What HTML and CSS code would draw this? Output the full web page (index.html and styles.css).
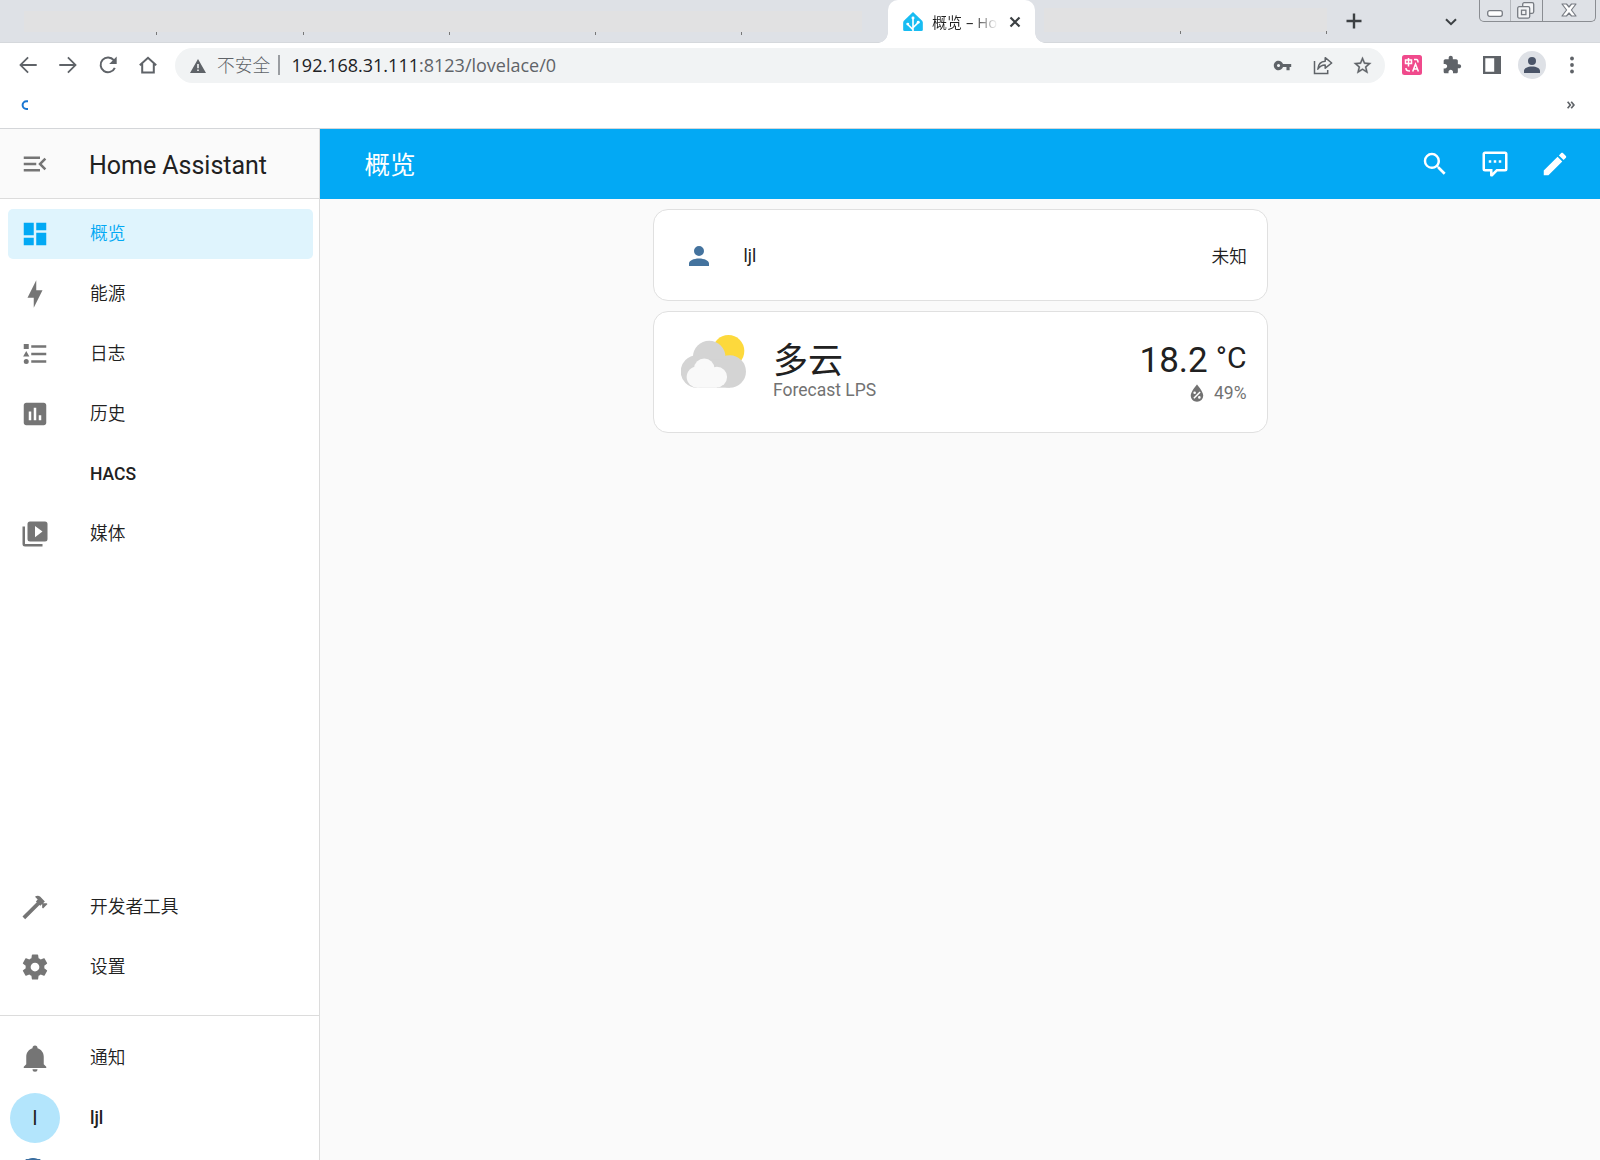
FILE: index.html
```
<!DOCTYPE html>
<html lang="zh-CN">
<head>
    <meta charset="UTF-8">
    <meta name="viewport" content="width=device-width, initial-scale=1.0">
    <title>概览 – Home Assistant</title>
    <link rel="stylesheet" href="styles.css">
</head>
<body>
    <!-- browser window -->
    <div class="tabstrip">
        <div class="tabs left">
            <i></i><i></i><i></i><i></i><i></i>
        </div>
        <div class="tab">
            <svg class="favicon" viewBox="0 0 60 58">
                <path fill="#18bcf2" d="M30 0 57 26Q60 29 60 33V54Q60 58 56 58H4Q0 58 0 54V33Q0 29 3 26Z"/>
                <path stroke="#fff" stroke-width="5" fill="none" d="M30 20V58M30 54 15 39M30 48 45 33"/>
                <g fill="#fff"><circle cx="30" cy="18" r="4.5"/><circle cx="14" cy="37" r="4.5"/><circle cx="46" cy="31" r="4.5"/></g>
            </svg>
            <span class="tab-title">概览 – Ho</span>
            <svg class="tab-close" viewBox="0 0 12 12"><path d="M1.5 1.5l9 9M10.5 1.5l-9 9" stroke="#3c4043" stroke-width="2.2"/></svg>
        </div>
        <div class="tabs right">
            <i></i><i></i>
        </div>
        <svg class="new-tab" viewBox="0 0 16 16"><path d="M8 .5v15M.5 8h15" stroke="#3c4043" stroke-width="2.4"/></svg>
        <svg class="tab-search" viewBox="0 0 12 8"><path d="M1 1.2l5 5 5-5" fill="none" stroke="#3c4043" stroke-width="2"/></svg>
        <div class="win-buttons">
            <span class="min"><svg width="16" height="7" viewBox="0 0 16 7"><rect x=".7" y=".7" width="14.6" height="5.6" rx="2" fill="#fff" stroke="#777b82" stroke-width="1.3"/></svg></span>
            <span class="max"><svg width="18" height="17" viewBox="0 0 18 17"><g fill="#f3f4f6" stroke="#777b82" stroke-width="1.3"><rect x="5.7" y=".7" width="11" height="10.6" rx="1.5"/><rect x=".7" y="4.7" width="12" height="11.4" rx="1.5"/><rect x="4.5" y="8.2" width="4.4" height="4.4"/></g></svg></span>
            <span class="close"><svg width="16" height="14" viewBox="0 0 16 14"><path d="M1 1h4.5L8 4l2.5-3H15l-4.6 6L15 13h-4.5L8 10l-2.5 3H1l4.6-6z" fill="#fff" stroke="#777b82" stroke-width="1.2" stroke-linejoin="round"/></svg></span>
        </div>
    </div>

    <div class="toolbar">
        <span class="tool"><svg width="22" height="22" viewBox="0 0 24 24"><path d="M21.5 11H6.2l6.6-6.6L11.4 3l-9 9 9 9 1.4-1.4L6.2 13h15.3z"/></svg></span>
        <span class="tool"><svg width="22" height="22" viewBox="0 0 24 24"><path d="M2.5 11h15.3l-6.6-6.6L12.6 3l9 9-9 9-1.4-1.4 6.6-6.6H2.5z"/></svg></span>
        <span class="tool"><svg width="20" height="20" viewBox="0 0 20 20"><path d="M16.8 12.8A7.4 7.4 0 1 1 15.8 5.2L17 6.5" fill="none" stroke="#5f6368" stroke-width="2"/><path d="M18.7 1.5V9h-7.5z"/></svg></span>
        <span class="tool"><svg width="20" height="20" viewBox="0 0 20 20"><path d="M1.8 10.2 10 2.8l8.2 7.4M4.2 8.5v9h11.6v-9" fill="none" stroke="#5f6368" stroke-width="2"/></svg></span>
        <div class="omnibox">
            <svg class="warn" viewBox="0 0 16 14"><path fill-rule="evenodd" d="M8 0l8 14H0zM7.2 5v4.2h1.6V5zM7.2 10.5v1.6h1.6v-1.6z"/></svg>
            <span class="insecure">不安全</span>
            <span class="url"><b>192.168.31.111</b>:8123/lovelace/0</span>
            <span class="tool"><svg width="19" height="19" viewBox="0 0 24 24"><path d="M12.65 10C11.83 7.67 9.61 6 7 6c-3.31 0-6 2.69-6 6s2.69 6 6 6c2.61 0 4.83-1.67 5.65-4H17v4h4v-4h2v-4H12.65zM7 14c-1.1 0-2-.9-2-2s.9-2 2-2 2 .9 2 2-.9 2-2 2z"/></svg></span>
            <span class="tool"><svg width="20" height="20" viewBox="0 0 20 20"><g fill="none" stroke="#5f6368" stroke-width="1.5"><path d="M1.5 6v12.5h13.2V15"/><path d="M4.8 14.2c.5-5 3-7.7 7.4-7.9V2.7L18.7 8l-6.5 5.2V9.900c-3.500 0-5.600 1.300-7.400 4.300z" stroke-linejoin="round"/></g></svg></span>
            <span class="tool"><svg width="21" height="21" viewBox="0 0 24 24"><path stroke="#5f6368" stroke-width=".3" d="M22 9.240l-7.190-.62L12 2 9.190 8.630 2 9.240l5.460 4.730L5.820 21 12 17.270 18.180 21l-1.630-7.030L22 9.240zM12 15.400l-3.760 2.270 1-4.280-3.320-2.880 4.380-.38L12 6.100l1.710 4.040 4.380.38-3.320 2.880 1 4.280L12 15.400z"/></svg></span>
        </div>
        <span class="tool"><svg width="20" height="20" viewBox="0 0 20 20">
            <rect width="20" height="20" rx="2.5" fill="#f04a8c"/>
            <g fill="none" stroke="#fff" stroke-width="1.5"><path d="M3.5 5h6v3.5h-6zM6.5 3v8.5M12 4.500h2.500q1.500 0 1.500 3M4 13v.5q0 2.500 4 2.500M10.700 16.500 13.500 9l2.900 7.500M11.500 14h4"/></g>
        </svg></span>
        <span class="tool"><svg width="20" height="20" viewBox="0 0 24 24"><path d="M20.500 11H19V7c0-1.100-.9-2-2-2h-4V3.500C13 2.120 11.880 1 10.500 1S8 2.120 8 3.500V5H4c-1.100 0-1.990.9-1.990 2v3.800H3.500c1.490 0 2.700 1.210 2.700 2.700s-1.210 2.700-2.700 2.700H2V20c0 1.100.9 2 2 2h3.800v-1.500c0-1.490 1.210-2.700 2.700-2.700 1.490 0 2.700 1.210 2.700 2.700V22H17c1.100 0 2-.9 2-2v-4h1.500c1.380 0 2.500-1.120 2.500-2.500S21.880 11 20.500 11z"/></svg></span>
        <span class="tool"><svg width="18" height="18" viewBox="0 0 18 18"><path fill-rule="evenodd" d="M0 0h18v18H0zM2.300 2.300v13.400h8.900V2.300z"/></svg></span>
        <span class="tool"><span class="profile"><svg width="24" height="24" viewBox="0 0 24 24"><path fill="#4a5468" d="M12 4a4 4 0 1 1 0 8 4 4 0 0 1 0-8M12 13.500c4.400 0 8 1.800 8 4.300V20H4v-2.200c0-2.500 3.600-4.300 8-4.300z"/></svg></span></span>
        <span class="tool"><svg width="4" height="18" viewBox="0 0 4 18"><circle cx="2" cy="2.500" r="1.900"/><circle cx="2" cy="9" r="1.900"/><circle cx="2" cy="15.500" r="1.900"/></svg></span>
    </div>

    <div class="bookmarks">
        <svg width="8" height="12" viewBox="0 0 8 12"><path d="M7 2.200H5.500A3.500 3.500 0 0 0 5.500 10H7" fill="none" stroke="#1976d2" stroke-width="2"/></svg>
        <svg width="8" height="8" viewBox="0 0 8 8"><path d="M.6.7 3.300 4 .6 7.300M4.200.7 6.900 4 4.200 7.300" fill="none" stroke="#5f6368" stroke-width="1.700"/></svg>
    </div>

    <!-- home assistant -->
    <div class="app">
        <nav class="sidebar">
            <div class="menu">
                <svg class="icon" viewBox="0 0 24 24"><path d="M21,15.610L19.590,17L14.580,12L19.590,7L21,8.390L17.440,12L21,15.610M3,6H16V8H3V6M3,13V11H13V13H3M3,18V16H16V18H3Z"/></svg>
                <span>Home Assistant</span>
            </div>
            <a class="item active">
                <svg class="icon" viewBox="0 0 24 24"><path d="M13,3V9H21V3M13,21H21V11H13M3,21H11V15H3M3,13H11V3H3V13Z"/></svg>
                <span class="zh">概览</span>
            </a>
            <a class="item">
                <svg class="icon" viewBox="0 0 24 24"><path d="M11 15H6L13 1V9H18L11 23V15Z"/></svg>
                <span class="zh">能源</span>
            </a>
            <a class="item">
                <svg class="icon" viewBox="0 0 24 24"><path d="M5,9.500L7.500,14H2.500L5,9.500M3,4H7V8H3V4M5,20A2,2 0 0,0 7,18A2,2 0 0,0 5,16A2,2 0 0,0 3,18A2,2 0 0,0 5,20M9,5V7H21V5H9M9,19H21V17H9V19M9,13H21V11H9V13Z"/></svg>
                <span class="zh">日志</span>
            </a>
            <a class="item">
                <svg class="icon" viewBox="0 0 24 24"><path fill-rule="evenodd" d="M9 17H7V10H9V17M13 17H11V7H13V17M17 17H15V13H17V17M19 3H5C3.900 3 3 3.900 3 5V19C3 20.100 3.900 21 5 21H19C20.100 21 21 20.100 21 19V5C21 3.900 20.100 3 19 3Z"/></svg>
                <span class="zh">历史</span>
            </a>
            <a class="item">
                <span class="icon"></span>
                <span>HACS</span>
            </a>
            <a class="item">
                <svg class="icon" viewBox="0 0 24 24"><path fill-rule="evenodd" d="M4,6H2V20A2,2 0 0,0 4,22H18V20H4V6M20,2H8A2,2 0 0,0 6,4V16A2,2 0 0,0 8,18H20A2,2 0 0,0 22,16V4A2,2 0 0,0 20,2M12,14.500V5.500L18,10L12,14.500Z"/></svg>
                <span class="zh">媒体</span>
            </a>
            <div class="spacer"></div>
            <a class="item">
                <svg class="icon" viewBox="0 0 24 24"><path d="M2,19.630L13.430,8.200L12.720,7.500L14.140,6.070L12,3.890C13.200,2.700 15.090,2.700 16.270,3.890L19.870,7.500L18.450,8.910H21.290L22,9.620L18.450,13.210L17.740,12.500V9.620L16.270,11.040L15.560,10.330L4.130,21.760L2,19.630Z"/></svg>
                <span class="zh">开发者工具</span>
            </a>
            <a class="item">
                <svg class="icon" viewBox="0 0 24 24"><path d="M12,15.500A3.500,3.500 0 0,1 8.500,12A3.500,3.500 0 0,1 12,8.500A3.500,3.500 0 0,1 15.500,12A3.500,3.500 0 0,1 12,15.500M19.430,12.970C19.470,12.650 19.500,12.330 19.500,12C19.500,11.670 19.470,11.340 19.430,11L21.540,9.370C21.730,9.220 21.780,8.950 21.660,8.730L19.660,5.270C19.540,5.050 19.270,4.960 19.050,5.050L16.560,6.050C16.040,5.660 15.500,5.320 14.870,5.070L14.500,2.420C14.460,2.180 14.250,2 14,2H10C9.750,2 9.540,2.180 9.500,2.420L9.130,5.070C8.500,5.320 7.960,5.660 7.440,6.050L4.950,5.050C4.730,4.960 4.460,5.050 4.340,5.270L2.340,8.730C2.210,8.950 2.270,9.220 2.460,9.370L4.570,11C4.530,11.340 4.500,11.670 4.500,12C4.500,12.330 4.530,12.650 4.570,12.970L2.460,14.630C2.270,14.780 2.210,15.050 2.340,15.270L4.340,18.730C4.460,18.950 4.730,19.030 4.950,18.950L7.440,17.940C7.960,18.340 8.500,18.680 9.130,18.930L9.500,21.580C9.540,21.820 9.750,22 10,22H14C14.250,22 14.460,21.820 14.500,21.580L14.870,18.930C15.500,18.670 16.040,18.340 16.560,17.940L19.050,18.950C19.270,19.030 19.540,18.950 19.660,18.730L21.660,15.270C21.780,15.050 21.730,14.780 21.540,14.630L19.430,12.970Z"/></svg>
                <span class="zh">设置</span>
            </a>
            <div class="divider"></div>
            <a class="item">
                <svg class="icon" viewBox="0 0 24 24"><path d="M21,19V20H3V19L5,17V11C5,7.900 7.030,5.170 10,4.290C10,4.190 10,4.100 10,4A2,2 0 0,1 12,2A2,2 0 0,1 14,4C14,4.100 14,4.190 14,4.290C16.970,5.170 19,7.900 19,11V17L21,19M14,21A2,2 0 0,1 12,23A2,2 0 0,1 10,21"/></svg>
                <span class="zh">通知</span>
            </a>
            <a class="item user">
                <span class="avatar">l</span>
                <span>ljl</span>
            </a>
            <div class="peek"></div>
        </nav>

        <main class="main">
            <header class="header">
                <h1>概览</h1>
                <svg viewBox="0 0 24 24"><path d="M9.500,3A6.500,6.500 0 0,1 16,9.500C16,11.110 15.410,12.590 14.440,13.730L14.710,14H15.500L20.500,19L19,20.500L14,15.500V14.710L13.730,14.440C12.590,15.410 11.110,16 9.500,16A6.500,6.500 0 0,1 3,9.500A6.500,6.500 0 0,1 9.500,3M9.500,5C7,5 5,7 5,9.500C5,12 7,14 9.500,14C12,14 14,12 14,9.500C14,7 12,5 9.500,5Z"/></svg>
                <svg viewBox="0 0 24 24"><path fill-rule="evenodd" d="M9,22A1,1 0 0,1 8,21V18H4A2,2 0 0,1 2,16V4C2,2.890 2.900,2 4,2H20A2,2 0 0,1 22,4V16A2,2 0 0,1 20,18H13.900L10.200,21.710C10,21.900 9.750,22 9.500,22H9M10,16V19.080L13.080,16H20V4H4V16H10M17,11H15V9H17V11M13,11H11V9H13V11M9,11H7V9H9V11Z"/></svg>
                <svg viewBox="0 0 24 24"><path d="M20.710,7.040C21.100,6.650 21.100,6 20.710,5.630L18.370,3.290C18,2.900 17.350,2.900 16.960,3.290L15.120,5.120L18.870,8.870M3,17.250V21H6.750L17.810,9.930L14.060,6.180L3,17.250Z"/></svg>
            </header>
            <div class="cards">
                <div class="card person">
                    <svg viewBox="0 0 24 24"><path d="M12,4A4,4 0 0,1 16,8A4,4 0 0,1 12,12A4,4 0 0,1 8,8A4,4 0 0,1 12,4M12,14C16.420,14 20,15.790 20,18V20H4V18C4,15.790 7.580,14 12,14Z"/></svg>
                    <span class="name">ljl</span>
                    <span class="zh">未知</span>
                </div>
                <div class="card weather">
                    <svg class="weather-icon" viewBox="0 0 196 160">
                        <circle cx="143" cy="48" r="48" fill="#fdd93c"/>
                        <g fill="#d4d4d4"><circle cx="85" cy="66" r="49"/><circle cx="48" cy="110" r="49"/><circle cx="147" cy="110" r="49"/><rect x="48" y="75" width="99" height="84"/></g>
                        <g fill="#f9f9f9"><circle cx="70" cy="102" r="31"/><circle cx="49" cy="127" r="32"/><circle cx="108" cy="127" r="31"/><rect x="49" y="105" width="59" height="54"/></g>
                    </svg>
                    <div class="info">
                        <div class="state">多云</div>
                        <div class="sub">Forecast LPS</div>
                    </div>
                    <div class="temp">
                        <div class="degrees">18.2<span>°C</span></div>
                        <div class="sub">
                            <svg viewBox="0 0 24 24"><path fill-rule="evenodd" d="M12,3.250C12,3.250 6,10 6,14C6,17.320 8.690,20 12,20A6,6 0 0,0 18,14C18,10 12,3.250 12,3.250M14.470,9.970L15.530,11.030L9.530,17.030L8.470,15.970M9.750,10A1.250,1.250 0 0,1 11,11.250A1.250,1.250 0 0,1 9.750,12.500A1.250,1.250 0 0,1 8.500,11.250A1.250,1.250 0 0,1 9.750,10M14.250,14.500A1.250,1.250 0 0,1 15.500,15.750A1.250,1.250 0 0,1 14.250,17A1.250,1.250 0 0,1 13,15.750A1.250,1.250 0 0,1 14.250,14.500Z"/></svg>
                            <span>49%</span>
                        </div>
                    </div>
                </div>
            </div>
        </main>
    </div>
</body>
</html>
```
FILE: styles.css
```
* {
    box-sizing: border-box;
}
body {
    margin: 0;
    height: 1160px;
    overflow: hidden;
    display: flex;
    flex-direction: column;
    background: #fff;
    color: #212121;
    font-family: Roboto, "Noto Sans CJK SC", sans-serif;
    font-size: 17.5px;
}
svg {
    display: block;
    flex: none;
}

/* tab strip */
.tabstrip {
    flex: none;
    height: 43px;
    display: flex;
    background: #dee1e6;
    border-bottom: 1px solid #d5d8dc;
}
.tabs {
    display: flex;
    height: 24px;
    margin-top: 11px;
    background: linear-gradient(#e1e1e2, #e1e1e2) no-repeat 0 0 / 100% 21px;
}
.tabs i {
    width: 146px;
    height: 24px;
    background: linear-gradient(#777, #777) no-repeat 100% 100% / 1px 3px;
}
.tabs.left {
    width: 838px;
    margin-left: 24px;
}
.tabs.left i:first-child {
    width: 133px;
}
.tabs.left i:nth-child(2) {
    width: 147px;
}
.tabs.right {
    width: 283px;
    height: 27px;
    margin-top: 8px;
    margin-left: 9px;
    background-size: 100% 24px;
}
.tabs.right i {
    height: 26px;
}
.tabs.right i:first-child {
    width: 137px;
}
.tab {
    position: relative;
    width: 147px;
    height: 43px;
    margin-left: 26px;
    padding-left: 15px;
    display: flex;
    align-items: center;
    background: #fff;
    border-radius: 10px 10px 0 0;
}
.tab::before,
.tab::after {
    content: "";
    position: absolute;
    bottom: 0;
    width: 10px;
    height: 10px;
}
.tab::before {
    left: -10px;
    background: radial-gradient(circle at 0 0, transparent 9.5px, #fff 10px);
}
.tab::after {
    right: -10px;
    background: radial-gradient(circle at 100% 0, transparent 9.5px, #fff 10px);
}
.favicon {
    width: 20px;
    height: 19px;
}
.tab-title {
    width: 66px;
    margin-left: 9px;
    padding-bottom: 1px;
    overflow: hidden;
    white-space: nowrap;
    font-family: "Open Sans", "Noto Sans CJK SC DemiLight", "Noto Sans CJK SC", sans-serif;
    font-size: 15px;
    -webkit-mask-image: linear-gradient(90deg, #000 60%, transparent);
    mask-image: linear-gradient(90deg, #000 60%, transparent);
}
.tab-close {
    width: 12px;
    height: 12px;
    margin-left: 11px;
}
.new-tab {
    width: 16px;
    height: 16px;
    margin: 13px 0 0 19px;
}
.tab-search {
    width: 12px;
    height: 8px;
    margin: 18px 0 0 83px;
}
.win-buttons {
    width: 117px;
    height: 22px;
    margin-left: 22px;
    display: flex;
    border: 1px solid #8a8d92;
    border-top: none;
    border-radius: 0 0 5px 5px;
}
.win-buttons span {
    display: flex;
    justify-content: center;
}
.win-buttons .min {
    width: 31px;
    padding-top: 10px;
    border-right: 1px solid #b5b8bd;
}
.win-buttons .max {
    width: 32px;
    padding: 2px 1px 0 0;
    border-right: 1px solid #8a8d92;
}
.win-buttons .close {
    width: 52px;
    padding-top: 3px;
}

/* address bar */
.toolbar {
    flex: none;
    height: 45px;
    display: flex;
    align-items: center;
    padding: 0 0 1px 7.5px;
}
.tool {
    width: 40px;
    display: flex;
    justify-content: center;
    fill: #5f6368;
}
.omnibox {
    width: 1210px;
    height: 35px;
    margin: 0 7px 0 7.5px;
    padding: 0 2.5px 0 15px;
    display: flex;
    align-items: center;
    border-radius: 18px;
    background: #f1f3f4;
    font-family: "Open Sans", "Noto Sans CJK SC Light", "Noto Sans CJK SC", sans-serif;
}
.warn {
    width: 16px;
    height: 14px;
    margin-top: 2px;
    fill: #5f6368;
}
.insecure {
    margin-left: 11px;
    padding-right: 8px;
    border-right: 2px solid #9a9da1;
    line-height: 20px;
    font-size: 17.7px;
    color: #5f6368;
}
.url {
    flex: 1;
    margin-left: 11.5px;
    padding-bottom: 1px;
    font-size: 18px;
    color: #5f6368;
}
.url b {
    font-weight: 400;
    color: #202124;
}
.profile {
    width: 28px;
    height: 28px;
    display: flex;
    align-items: center;
    justify-content: center;
    border-radius: 50%;
    background: #dee1e6;
}
.bookmarks {
    flex: none;
    height: 41px;
    padding: 0 25px 7px 21px;
    display: flex;
    align-items: center;
    justify-content: space-between;
    border-bottom: 1px solid #d4d6d9;
}

/* sidebar */
.app {
    flex: 1;
    display: flex;
    min-height: 0;
}
.sidebar {
    width: 320px;
    display: flex;
    flex-direction: column;
    border-right: 1px solid #dcdcdc;
    overflow: hidden;
}
.menu {
    flex: none;
    height: 70px;
    margin-bottom: 10px;
    padding-left: 20px;
    display: flex;
    align-items: center;
    background: #fafafa;
    border-bottom: 1px solid #dcdcdc;
    font-size: 25px;
    letter-spacing: -0.03px;
}
.menu span {
    margin-left: 39px;
    padding-top: 3px;
}
.icon {
    width: 30px;
    height: 30px;
    fill: #757575;
}
.item {
    flex: none;
    height: 50px;
    margin: 0 6px 10px 8px;
    padding-left: 12px;
    display: flex;
    align-items: center;
    border-radius: 5px;
    font-weight: 500;
}
.item .icon + span {
    margin-left: 40px;
}
.zh {
    padding-bottom: 4px;
    font-family: "Noto Sans CJK SC DemiLight", "Noto Sans CJK SC Light", "Noto Sans CJK SC", sans-serif;
    font-size: 17.7px;
    font-weight: 400;
}
.active {
    background: #dff4fd;
    color: #03a9f4;
}
.active .icon {
    fill: #03a9f4;
}
.spacer {
    flex: 1;
}
.divider {
    flex: none;
    height: 1px;
    margin: 13px 0 17px;
    background: #dcdcdc;
}
.user {
    padding-left: 2px;
    margin-bottom: 15px;
}
.avatar {
    width: 50px;
    height: 50px;
    margin-right: 30px;
    border-radius: 50%;
    background: #b3e5fc;
    line-height: 50px;
    text-align: center;
    font-size: 20px;
    font-weight: 400;
}
.peek {
    flex: none;
    width: 34px;
    height: 2px;
    margin-left: 16px;
    background: radial-gradient(circle at 50% 22px, #fff 19.5px, #3b6ea0 20.5px, #3b6ea0 21.5px, transparent 22px);
}

/* dashboard */
.main {
    flex: 1;
    background: #fafafa;
}
.header {
    height: 70px;
    padding: 0 30px 0 44.5px;
    display: flex;
    align-items: center;
    gap: 30px;
    background: #03a9f4;
    color: #fff;
}
.header h1 {
    flex: 1;
    margin: 0;
    padding-bottom: 4px;
    font-size: 25.5px;
    font-weight: 400;
}
.header svg {
    width: 30px;
    height: 30px;
    fill: #fff;
}
.cards {
    width: 615px;
    margin: 10px auto 0;
    display: flex;
    flex-direction: column;
    gap: 10px;
}
.card {
    display: flex;
    background: #fff;
    border: 1px solid #e0e0e0;
    border-radius: 15px;
}
.person {
    height: 92px;
    padding: 1px 19.5px 0 30px;
    align-items: center;
}
.person svg {
    width: 30px;
    height: 30px;
    margin-top: 1px;
    fill: #44739e;
}
.person .name {
    flex: 1;
    margin-left: 30px;
    padding-top: 1px;
}
.person .zh {
    padding-bottom: 2px;
}
.weather {
    height: 122px;
    padding: 0 20px 0 27px;
}
.weather-icon {
    width: 65px;
    height: 53px;
    margin-top: 23px;
}
.info {
    flex: 1;
    margin: 29px 0 0 27.5px;
}
.state,
.degrees {
    font-size: 35px;
    line-height: 41px;
}
.sub {
    display: flex;
    align-items: center;
    justify-content: flex-end;
    line-height: 22px;
    color: #727272;
}
.info .sub {
    justify-content: flex-start;
    margin-top: -3px;
}
.temp {
    margin-top: 28px;
}
.degrees {
    display: flex;
}
.degrees span {
    margin-left: 8px;
    font-size: 30px;
    line-height: 36px;
}
.temp .sub {
    margin-top: -2px;
}
.temp .sub svg {
    width: 26px;
    height: 25px;
    margin: 2px 4px 0 0;
}
.temp .sub svg path {
    fill: #727272;
}
```
